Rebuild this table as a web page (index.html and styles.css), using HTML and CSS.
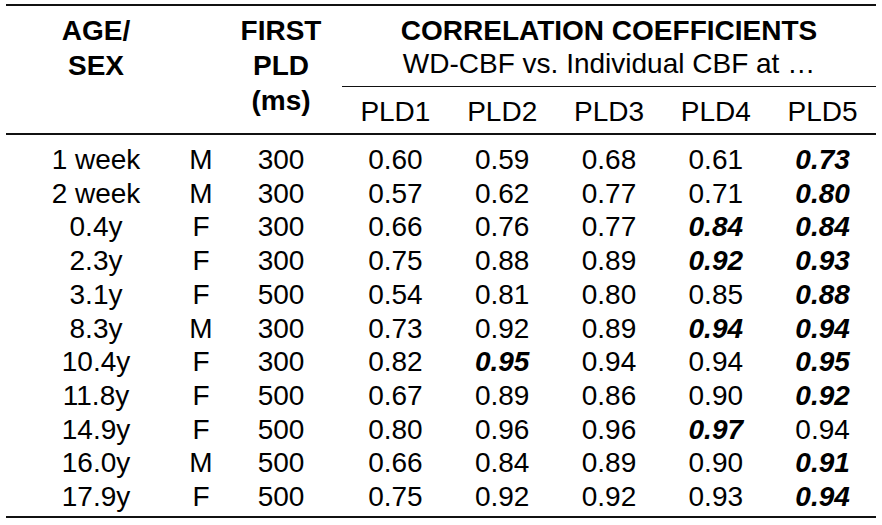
FILE: index.html
```html
<!DOCTYPE html>
<html lang="en">
<head>
<meta charset="utf-8">
<title>Correlation coefficients</title>
<link rel="stylesheet" href="styles.css">
</head>
<body>
<table class="corr">
  <colgroup>
    <col class="c-age">
    <col class="c-sex">
    <col class="c-pld">
    <col class="c-val">
    <col class="c-val">
    <col class="c-val">
    <col class="c-val">
    <col class="c-val">
  </colgroup>
  <thead>
    <tr class="h1">
      <th class="side" rowspan="2">AGE/<br>SEX</th>
      <th class="side" rowspan="2"></th>
      <th class="side pld" rowspan="2">FIRST<br>PLD<br>(ms)</th>
      <th class="group" colspan="5">CORRELATION COEFFICIENTS<br><span class="sub">WD-CBF vs. Individual CBF at …</span></th>
    </tr>
    <tr class="h2">
      <th>PLD1</th>
      <th>PLD2</th>
      <th>PLD3</th>
      <th>PLD4</th>
      <th>PLD5</th>
    </tr>
  </thead>
  <tbody>
    <tr class="first"><td>1 week</td><td>M</td><td>300</td><td>0.60</td><td>0.59</td><td>0.68</td><td>0.61</td><td><em>0.73</em></td></tr>
    <tr><td>2 week</td><td>M</td><td>300</td><td>0.57</td><td>0.62</td><td>0.77</td><td>0.71</td><td><em>0.80</em></td></tr>
    <tr><td>0.4y</td><td>F</td><td>300</td><td>0.66</td><td>0.76</td><td>0.77</td><td><em>0.84</em></td><td><em>0.84</em></td></tr>
    <tr><td>2.3y</td><td>F</td><td>300</td><td>0.75</td><td>0.88</td><td>0.89</td><td><em>0.92</em></td><td><em>0.93</em></td></tr>
    <tr><td>3.1y</td><td>F</td><td>500</td><td>0.54</td><td>0.81</td><td>0.80</td><td>0.85</td><td><em>0.88</em></td></tr>
    <tr><td>8.3y</td><td>M</td><td>300</td><td>0.73</td><td>0.92</td><td>0.89</td><td><em>0.94</em></td><td><em>0.94</em></td></tr>
    <tr><td>10.4y</td><td>F</td><td>300</td><td>0.82</td><td><em>0.95</em></td><td>0.94</td><td>0.94</td><td><em>0.95</em></td></tr>
    <tr><td>11.8y</td><td>F</td><td>500</td><td>0.67</td><td>0.89</td><td>0.86</td><td>0.90</td><td><em>0.92</em></td></tr>
    <tr><td>14.9y</td><td>F</td><td>500</td><td>0.80</td><td>0.96</td><td>0.96</td><td><em>0.97</em></td><td>0.94</td></tr>
    <tr><td>16.0y</td><td>M</td><td>500</td><td>0.66</td><td>0.84</td><td>0.89</td><td>0.90</td><td><em>0.91</em></td></tr>
    <tr class="last"><td>17.9y</td><td>F</td><td>500</td><td>0.75</td><td>0.92</td><td>0.92</td><td>0.93</td><td><em>0.94</em></td></tr>
  </tbody>
</table>
</body>
</html>
```

FILE: styles.css
```css
html, body {
  margin: 0;
  padding: 0;
  background: #ffffff;
}

body {
  padding: 4px 6px 0;
  font-family: "Liberation Sans", Arial, sans-serif;
  color: #000000;
}

.corr {
  border-collapse: collapse;
  table-layout: fixed;
  width: 870px;
  font-size: 28px;
}

.c-age { width: 180px; }
.c-sex { width: 30px; }
.c-pld { width: 126px; }
.c-val { width: 106.8px; }

.corr th,
.corr td {
  padding: 0;
  text-align: center;
  white-space: nowrap;
}

.corr thead .h1 th {
  border-top: 2px solid #111;
  vertical-align: top;
}

.corr th.side {
  font-weight: bold;
  line-height: 35px;
  padding-top: 7px;
  border-bottom: 2px solid #111;
}

.corr th.pld,
.corr td:nth-child(3) {
  padding-left: 4px;
}

.corr th.group {
  font-weight: bold;
  line-height: 33px;
  padding: 8px 0 6px;
  border-bottom: 1px solid #111;
}

.corr .sub {
  font-weight: normal;
}

.corr .h2 th {
  font-weight: normal;
  line-height: 28px;
  padding: 11px 0 7px;
  border-bottom: 2px solid #111;
}

.corr td {
  line-height: 33.7px;
}

.corr tr.first td {
  padding-top: 8px;
}

.corr tr.last td {
  padding-bottom: 2px;
  border-bottom: 2px solid #111;
}

.corr em {
  font-style: italic;
  font-weight: bold;
}
```
